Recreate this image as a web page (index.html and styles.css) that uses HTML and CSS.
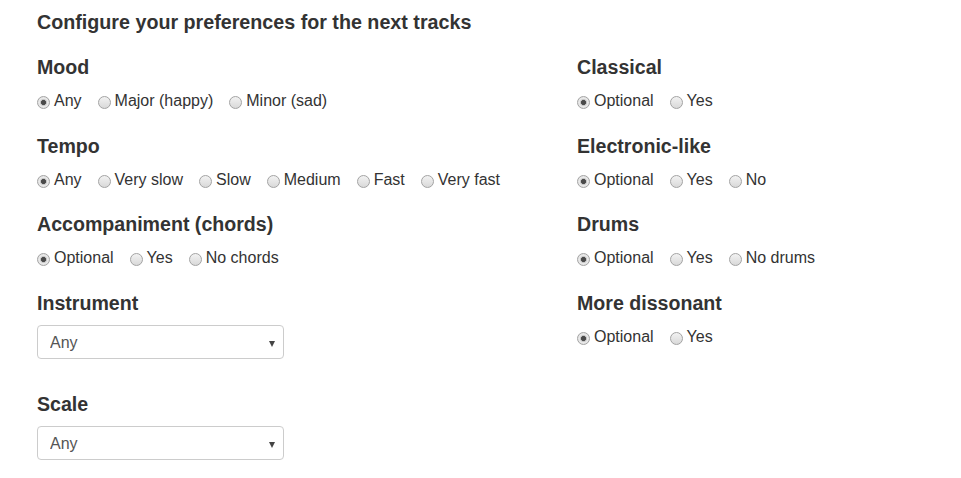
FILE: index.html
```html
<!DOCTYPE html>
<html lang="en">
<head>
<meta charset="utf-8">
<title>Preferences</title>
<link rel="stylesheet" href="styles.css">
</head>
<body>
<div class="page">
  <h3 class="title">Configure your preferences for the next tracks</h3>
  <div class="cols">
    <div class="col col-left">
      <div class="group">
        <h4 class="label">Mood</h4>
        <div class="options">
          <label class="opt"><input type="radio" name="mood" checked><span>Any</span></label>
          <label class="opt"><input type="radio" name="mood"><span>Major (happy)</span></label>
          <label class="opt"><input type="radio" name="mood"><span>Minor (sad)</span></label>
        </div>
      </div>
      <div class="group">
        <h4 class="label">Tempo</h4>
        <div class="options">
          <label class="opt"><input type="radio" name="tempo" checked><span>Any</span></label>
          <label class="opt"><input type="radio" name="tempo"><span>Very slow</span></label>
          <label class="opt"><input type="radio" name="tempo"><span>Slow</span></label>
          <label class="opt"><input type="radio" name="tempo"><span>Medium</span></label>
          <label class="opt"><input type="radio" name="tempo"><span>Fast</span></label>
          <label class="opt"><input type="radio" name="tempo"><span>Very fast</span></label>
        </div>
      </div>
      <div class="group">
        <h4 class="label">Accompaniment (chords)</h4>
        <div class="options">
          <label class="opt"><input type="radio" name="acc" checked><span>Optional</span></label>
          <label class="opt"><input type="radio" name="acc"><span>Yes</span></label>
          <label class="opt"><input type="radio" name="acc"><span>No chords</span></label>
        </div>
      </div>
      <div class="group group-select">
        <h4 class="label">Instrument</h4>
        <div class="select-wrap">
          <select class="select"><option>Any</option></select>
        </div>
      </div>
      <div class="group group-select">
        <h4 class="label">Scale</h4>
        <div class="select-wrap">
          <select class="select"><option>Any</option></select>
        </div>
      </div>
    </div>
    <div class="col col-right">
      <div class="group">
        <h4 class="label">Classical</h4>
        <div class="options">
          <label class="opt"><input type="radio" name="cls" checked><span>Optional</span></label>
          <label class="opt"><input type="radio" name="cls"><span>Yes</span></label>
        </div>
      </div>
      <div class="group">
        <h4 class="label">Electronic-like</h4>
        <div class="options">
          <label class="opt"><input type="radio" name="el" checked><span>Optional</span></label>
          <label class="opt"><input type="radio" name="el"><span>Yes</span></label>
          <label class="opt"><input type="radio" name="el"><span>No</span></label>
        </div>
      </div>
      <div class="group">
        <h4 class="label">Drums</h4>
        <div class="options">
          <label class="opt"><input type="radio" name="dr" checked><span>Optional</span></label>
          <label class="opt"><input type="radio" name="dr"><span>Yes</span></label>
          <label class="opt"><input type="radio" name="dr"><span>No drums</span></label>
        </div>
      </div>
      <div class="group">
        <h4 class="label">More dissonant</h4>
        <div class="options">
          <label class="opt"><input type="radio" name="dis" checked><span>Optional</span></label>
          <label class="opt"><input type="radio" name="dis"><span>Yes</span></label>
        </div>
      </div>
    </div>
  </div>
</div>
</body>
</html>
```
FILE: styles.css
```css
html, body {
  margin: 0;
  padding: 0;
  background: #fff;
}
body {
  font-family: "Liberation Sans", Arial, sans-serif;
  color: #333;
  font-size: 16px;
}
.page {
  padding: 10px 0 0 37px;
}
.title {
  margin: 0 0 21px 0;
  font-size: 19.7px;
  line-height: 24px;
  font-weight: bold;
}
.cols {
  display: grid;
  grid-template-columns: 540px 1fr;
}
.col {
  display: flex;
  flex-direction: column;
}
.group {
  margin-bottom: 21.7px;
}
.label {
  margin: 0 0 11px 0;
  font-size: 19.6px;
  line-height: 24px;
  font-weight: bold;
}
.options {
  display: flex;
  align-items: center;
  height: 22px;
}
.opt {
  display: inline-flex;
  align-items: center;
  margin-right: 16px;
  line-height: 22px;
  cursor: pointer;
}
.opt input {
  -webkit-appearance: none;
  appearance: none;
  width: 13px;
  height: 13px;
  margin: 3px 4px 0 0;
  border: 1px solid #a3a3a3;
  border-radius: 50%;
  background: linear-gradient(#f2f2f2, #d9d9d9);
  box-sizing: border-box;
  flex: none;
}
.opt input:checked {
  background: radial-gradient(circle, #4a4a4a 0, #4a4a4a 2.2px, #bdbdbd 2.8px, #e9e9e9 4px, #dedede 100%);
}
.group-select .label {
  margin-bottom: 10px;
}
.group-select {
  margin-bottom: 33px;
}
.select-wrap {
  position: relative;
  width: 247px;
}
.select {
  -webkit-appearance: none;
  appearance: none;
  display: block;
  width: 247px;
  height: 34px;
  padding: 0 12px;
  border: 1px solid #ccc;
  border-radius: 4px;
  background: #fff;
  color: #555;
  font-family: "Liberation Sans", Arial, sans-serif;
  font-size: 16px;
  box-sizing: border-box;
}
.select-wrap::after {
  content: "";
  position: absolute;
  right: 9px;
  top: 16px;
  border-left: 3.5px solid transparent;
  border-right: 3.5px solid transparent;
  border-top: 6px solid #444;
}
```
